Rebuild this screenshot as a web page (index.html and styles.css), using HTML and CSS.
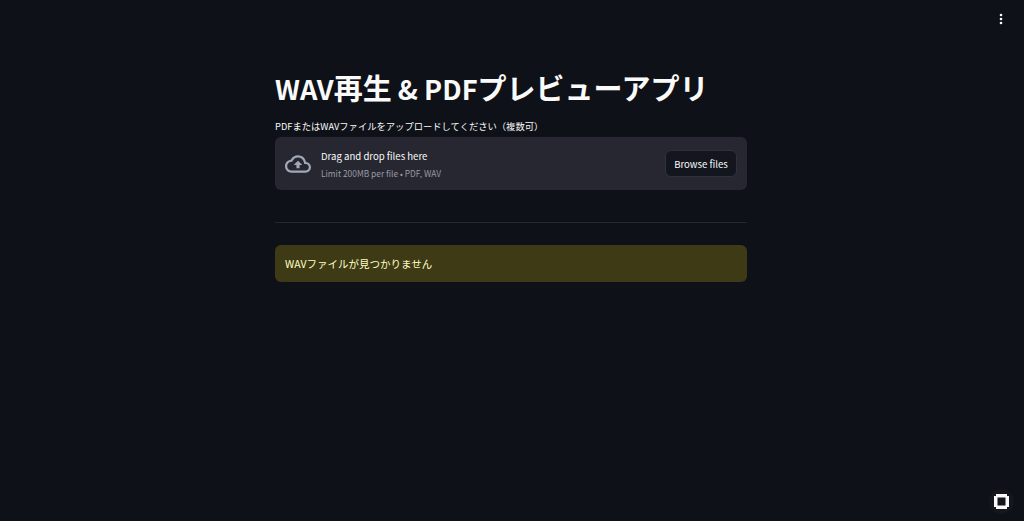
FILE: index.html
```html
<!DOCTYPE html>
<html lang="ja">
<head>
    <meta charset="UTF-8" />
    <meta name="viewport" content="width=device-width, initial-scale=1" />
    <title>WAV再生 & PDFプレビューアプリ</title>
    <link rel="stylesheet" href="styles.css">
</head>
<body>

    <button class="menu-button" aria-label="メニュー">
        <svg width="16" height="16" viewBox="0 0 16 16" fill="#fafafa">
            <circle cx="8" cy="4" r="1.3" />
            <circle cx="8" cy="8" r="1.3" />
            <circle cx="8" cy="12" r="1.3" />
        </svg>
    </button>

    <div class="main">
        <h1><span class="latin">WAV</span>再生<span class="latin"> &amp; PDF</span>プレビューアプリ</h1>

        <p class="uploader-label">PDFまたはWAVファイルをアップロードしてください（複数可）</p>
        <div class="uploader">
            <svg class="cloud-icon" width="26" height="26" viewBox="0 0 24 24" fill="#a3a8b8">
                <path d="M19.35 10.04C18.67 6.59 15.64 4 12 4 9.11 4 6.6 5.64 5.35 8.04 2.34 8.36 0 10.91 0 14c0 3.31 2.69 6 6 6h13c2.76 0 5-2.24 5-5 0-2.64-2.05-4.78-4.65-4.96zM19 18H6c-2.21 0-4-1.79-4-4 0-2.05 1.53-3.76 3.56-3.97l1.07-.11.5-.95C8.08 7.14 9.94 6 12 6c2.62 0 4.88 1.86 5.39 4.43l.3 1.5 1.53.11c1.56.1 2.78 1.41 2.78 2.96 0 1.65-1.35 3-3 3zM8 13h2.55v3h2.9v-3H16l-4-4z" />
            </svg>
            <div class="uploader-text">
                <span class="drop-title">Drag and drop files here</span>
                <span class="drop-limit">Limit 200MB per file • PDF, WAV</span>
            </div>
            <button class="browse-button">Browse files</button>
        </div>

        <hr class="divider" />

        <div class="alert">WAVファイルが見つかりません</div>
    </div>

    <div class="status-badge">
        <svg width="15" height="15" viewBox="0 0 15 15" fill="#fafafa">
            <path d="M2 0h11v2h2v11h-2v2H2v-2H0V2h2zm1.5 3.5v8h8v-8z" fill-rule="evenodd" />
        </svg>
    </div>

</body>
</html>
```

FILE: styles.css
```css
body {
    margin: 0;
    height: 521px;
    overflow: hidden;
    background: #0e1117;
    color: #fafafa;
    font-family: "Noto Sans CJK JP", "Noto Sans", sans-serif;
}
.main {
    width: 472px;
    margin: 0 auto;
    padding-top: 66px;
    position: relative;
    left: -1px;
}
h1 {
    margin: 0;
    height: 42px;
    font-size: 29px;
    line-height: 42px;
    font-weight: 700;
}
h1 .latin {
    font-size: 27.2px;
}
.uploader-label {
    margin: 11px 0 4px;
    font-size: 9.3px;
    line-height: 14px;
}
.uploader {
    display: flex;
    align-items: center;
    height: 53px;
    padding: 0 10px;
    background: #262730;
    border-radius: 6px;
    box-sizing: border-box;
}
.cloud-icon {
    margin-right: 10px;
}
.uploader-text {
    display: flex;
    flex-direction: column;
    flex: 1;
    gap: 1px;
    padding-top: 1px;
}
.drop-title {
    font-size: 9.6px;
    line-height: 17px;
}
.drop-limit {
    font-size: 8.4px;
    line-height: 14px;
    color: #9a9ca4;
}
.browse-button {
    width: 72px;
    height: 27px;
    padding: 0;
    background: #13161e;
    color: #fafafa;
    border: 1px solid #30323b;
    border-radius: 6px;
    font-family: inherit;
    font-size: 9.6px;
}
.divider {
    margin: 32px 0 22px;
    border: none;
    border-top: 1px solid #262730;
}
.alert {
    height: 37px;
    padding: 0 10px;
    display: flex;
    align-items: center;
    background: #3e3a16;
    color: #ffffc2;
    border-radius: 6px;
    font-size: 10.5px;
}
.menu-button {
    position: absolute;
    top: 11px;
    right: 15px;
    padding: 0;
    display: flex;
    background: none;
    border: none;
}
.status-badge {
    position: absolute;
    right: 10px;
    bottom: 7px;
    width: 25px;
    height: 25px;
    display: flex;
    align-items: center;
    justify-content: center;
    background: #14171e;
    border-radius: 50%;
}
```
